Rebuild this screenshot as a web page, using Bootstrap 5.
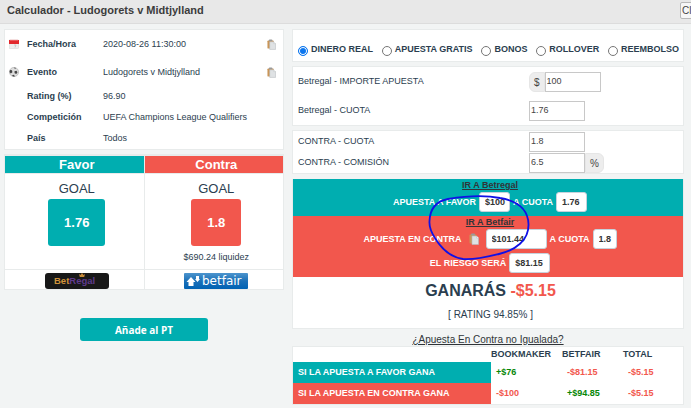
<!DOCTYPE html>
<html lang="es">
<head>
<meta charset="utf-8">
<meta name="viewport" content="width=device-width, initial-scale=1">
<title>Calculador - Ludogorets v Midtjylland</title>
<link rel="stylesheet" href="https://cdn.jsdelivr.net/npm/bootstrap@5.3.0/dist/css/bootstrap.min.css">
<style>
:root { --teal: #00aeb0; --coral: #f2574d; --ink: #2b3e4f; --line: #e8ebeb; }
body { background: #f2f4f4; color: var(--ink); font: 9px/13px "Liberation Sans", Arial, sans-serif; overflow-x: hidden; }
.topbar { background: #e8e8e8; border-bottom: 1px solid #dcdcdc; height: 24px; padding-left: 7px; overflow: hidden; }
.topbar h1 { font-size: 11px; line-height: 20px; color: #3c3c3c; }
.close-btn { width: 44px; height: 17px; margin: 2px -33px 0 0; padding: 0 1px; border: 1px solid #b8b8b8; border-radius: 2px; background: #f6f6f6; color: #444; font-size: 10px; line-height: 14px; text-align: left; }
.layout { display: grid; grid-template-columns: 5fr 7fr; column-gap: 8px; padding: 5px 7px 0 4px; }
.panel { background: #fff; border: 1px solid var(--line); }
.teal-bg { background: var(--teal); color: #fff; }
.coral-bg { background: var(--coral); color: #fff; }
.info td, .info th { padding: 0; height: 21px; vertical-align: middle; }
.info tr.tall > * { height: 28px; }
.info .ic { width: 22px; padding-left: 4px; }
.info th { width: 76px; }
.info .clip { width: 16px; }
.info svg { display: block; }
.bets { table-layout: fixed; }
.bets th, .bets td { padding: 0 0 0 5px; text-align: center; border: 1px solid var(--line); }
.bets thead th { font-size: 13px; line-height: 17px; border-top-width: 2px; }
.bets .goal td { height: 96px; vertical-align: top; padding-top: 7px; }
.bets .goal h2 { font-size: 13px; line-height: 16px; font-weight: 400; margin: 0 0 2px; }
.odd { border: 0; border-radius: 3px; height: 47px; padding: 0 16px; font-size: 13px; font-weight: 700; }
.liq { margin-top: 5px; }
.bets .logos td { height: 20px; padding-top: 2px; }
.bets .logos a, .bets .logos svg { display: block; }
.bets .logos svg { margin: auto; }
.add-btn { width: 128px; height: 23px; margin-top: 28px; border: 0; border-radius: 3px; font: bold 10px/20px "Open Sans", sans-serif; }
.modes { height: 33px; padding: 7px 4px 0 5px; font-weight: 700; }
.modes input { appearance: none; flex: none; width: 10px; height: 10px; margin: 3px 3px 0 0; border: 1px solid #767676; border-radius: 50%; background: #fff; }
.modes input:checked { border-color: #0b76ef; background: #0b76ef; box-shadow: inset 0 0 0 1px #fff; }
.fields { margin-top: 4px; padding-left: 5px; }
.field { height: 21px; }
.fields.roomy { padding-top: 4px; padding-bottom: 4px; }
.fields.roomy .field + .field { margin-top: 8px; }
.fields > .field > label { flex: 0 0 231px; }
.box-in { width: 56px; height: 20px; padding: 0 2px 1px 1px; border: 1px solid #c8c8c8; border-radius: 0; background: #fff; color: #444; outline: 0; }
.addon { height: 20px; background: #ededed; color: #444; border: 1px solid #e6e6e6; padding: 3px 4px 0; font-size: 10px; }
.summary { margin-top: 5px; border-top-width: 0; }
.summary a, .more a { color: #303438; text-decoration: underline; }
.band { font-weight: 700; padding: 0 0 4px 4px; }
.band > a { line-height: 13px; display: block; }
.line { height: 20px; gap: 3px; }
.line + .line { margin-top: 4px; }
.res { height: 20px; border: 1px solid #c6d2dc; border-radius: 3px; background: #fff; color: #333; font-weight: 700; padding: 0 0 0 5px; outline: 0; }
.w-s { width: 24px; } .w-m { width: 31px; } .w-l { width: 41px; } .w-xl { width: 61px; }
.gain { font-size: 16px; line-height: 20px; font-weight: 700; padding: 4px 0 0 5px; }
.rate { font-size: 10px; height: 27px; padding: 7px 0 0 5px; }
.neg { color: var(--coral); } .pos { color: #068606; }
.more { font-size: 10px; line-height: 13px; margin-top: 4px; text-align: center; }
.pen { left: 50%; top: 13px; margin-left: -62px; pointer-events: none; }
.totals th, .totals td { padding: 0; height: 21px; font-weight: 700; }
.totals thead th { height: 15px; }
.totals tbody th { padding-left: 5px; width: 198px; }
.totals td { padding-left: 5px; }
.totals thead td { height: 15px; }
.totals td:nth-child(2) { width: 71px; } .totals td:nth-child(3) { width: 61px; }
</style>
</head>
<body>
<svg width="0" height="0" class="position-absolute" aria-hidden="true">
  <symbol id="clip" viewBox="0 0 10 12">
    <rect x="0.5" y="1.5" width="7" height="9" rx="1" fill="#c99558"/><rect x="2" y="0.5" width="4" height="2" rx="1" fill="#9a9a9a"/>
    <path d="M3 3h4.500L9.500 5v6.500H3z" fill="#dfe2e4" stroke="#b6babd" stroke-width=".6"/><path d="M7.500 3v2h2" fill="#fff" stroke="#b6babd" stroke-width=".5"/>
  </symbol>
</svg>
<header class="topbar d-flex justify-content-between align-items-start">
  <h1 class="m-0 fw-bold">Calculador - Ludogorets v Midtjylland</h1>
  <button class="close-btn flex-shrink-0" type="button">Close</button>
</header>
<main class="layout">
  <section>
    <div class="panel">
      <table class="info w-100">
        <tr class="tall">
          <td class="ic"><svg width="10" height="10" viewBox="0 0 10 10"><rect x=".5" y="1" width="9" height="8.500" fill="#eee" stroke="#d2d2d2" stroke-width=".5"/><path d="M0 1h10v4H0z" fill="#e2292d"/><path d="M2 0v2M4 0v2M6 0v2M8 0v2" stroke="#f5b5b5" stroke-width=".7"/><path d="M5 6h2L6 8.500" fill="none" stroke="#bbb" stroke-width=".7"/></svg></td>
          <th scope="row">Fecha/Hora</th><td>2020-08-26 11:30:00</td>
          <td class="clip"><svg width="9" height="11"><use href="#clip"/></svg></td>
        </tr>
        <tr class="tall">
          <td class="ic"><svg width="10" height="10" viewBox="0 0 10 10"><circle cx="5" cy="5" r="4.600" fill="#ddd" stroke="#aaa" stroke-width=".6"/><path d="M1 3l2 .3.400 2L1.800 6.600.500 5zM5.500 4.300l2-.6 1 1.600-1.200 1.700-1.700-.8zM3 8.200l2-.4.900 1.700H4zM5 .500L7 1 6 2z" fill="#444"/></svg></td>
          <th scope="row">Evento</th><td>Ludogorets v Midtjylland</td>
          <td class="clip"><svg width="9" height="11"><use href="#clip"/></svg></td>
        </tr>
        <tr><td class="ic"></td><th scope="row">Rating (%)</th><td colspan="2">96.90</td></tr>
        <tr><td class="ic"></td><th scope="row">Competición</th><td colspan="2">UEFA Champions League Qualifiers</td></tr>
        <tr><td class="ic"></td><th scope="row">País</th><td colspan="2">Todos</td></tr>
      </table>
    </div>
    <table class="bets w-100 bg-white mt-1">
      <thead><tr><th class="teal-bg" scope="col">Favor</th><th class="coral-bg" scope="col">Contra</th></tr></thead>
      <tbody>
        <tr class="goal">
          <td><h2>GOAL</h2><button class="odd teal-bg" type="button">1.76</button></td>
          <td><h2>GOAL</h2><button class="odd coral-bg" type="button">1.8</button><div class="liq">$690.24 liquidez</div></td>
        </tr>
        <tr class="logos">
          <td><a href="#" aria-label="BetRegal"><svg width="64" height="16" viewBox="0 0 64 16"><rect width="64" height="16" rx="3" fill="#181818"/><text x="9" y="11" fill="#d0933a" font-family="Liberation Sans, Arial, sans-serif" font-size="9.500" font-weight="700">Bet<tspan fill="#5f3a8c">Regal</tspan></text><path d="M34 1l1.500 1L37 0l1.500 2L40 1l-.8 3h-4.400z" fill="#c78a38"/></svg></a></td>
          <td><a href="#" aria-label="betfair"><svg width="64" height="16" viewBox="0 0 64 16"><defs><linearGradient id="bf" x2="0" y2="1"><stop stop-color="#4d94cd"/><stop offset=".5" stop-color="#1b70b8"/><stop offset="1" stop-color="#0062b4"/></linearGradient></defs><rect width="64" height="16" rx="1" fill="url(#bf)"/><path d="M7 4l4.500 5H9.500v4h-5V9H2.500z" fill="#fff"/><path d="M13.500 9L11 6h1V3h3v3h1z" fill="#fff"/><text x="18" y="12" fill="#fff" font-family="DejaVu Sans, sans-serif" font-size="12">betfair</text></svg></a></td>
        </tr>
      </tbody>
    </table>
    <div class="text-center"><button class="add-btn teal-bg" type="button">Añade al PT</button></div>
  </section>

  <section>
    <div class="panel modes d-flex justify-content-between align-items-center">
      <label class="d-flex"><input type="radio" name="mode" checked>DINERO REAL</label>
      <label class="d-flex"><input type="radio" name="mode">APUESTA GRATIS</label>
      <label class="d-flex"><input type="radio" name="mode">BONOS</label>
      <label class="d-flex"><input type="radio" name="mode">ROLLOVER</label>
      <label class="d-flex"><input type="radio" name="mode">REEMBOLSO</label>
    </div>
    <div class="panel fields roomy">
      <div class="field d-flex align-items-center"><label for="stake">Betregal - IMPORTE APUESTA</label><span class="addon rounded-start">$</span><input class="box-in" id="stake" value="100"></div>
      <div class="field d-flex align-items-center"><label for="back">Betregal - CUOTA</label><input class="box-in" id="back" value="1.76"></div>
    </div>
    <div class="panel fields">
      <div class="field d-flex align-items-center"><label for="lay">CONTRA - CUOTA</label><input class="box-in" id="lay" value="1.8"></div>
      <div class="field d-flex align-items-center"><label for="fee">CONTRA - COMISIÓN</label><input class="box-in" id="fee" value="6.5"><span class="addon rounded-end">%</span></div>
    </div>
    <div class="panel summary position-relative text-center">
      <div class="band teal-bg">
        <a href="#">IR A Betregal</a>
        <div class="line d-flex justify-content-center align-items-center"><label for="r1">APUESTA A FAVOR</label><input class="res w-m" id="r1" value="$100" readonly><label for="r2">A CUOTA</label><input class="res w-m" id="r2" value="1.76" readonly></div>
      </div>
      <div class="band coral-bg">
        <a href="#">IR A Betfair</a>
        <div class="line d-flex justify-content-center align-items-center"><label for="r3">APUESTA EN CONTRA</label><svg class="mx-1" width="10" height="12"><use href="#clip"/></svg><input class="res w-xl" id="r3" value="$101.44" readonly><label for="r4">A CUOTA</label><input class="res w-s" id="r4" value="1.8" readonly></div>
        <div class="line d-flex justify-content-center align-items-center"><label for="r5">EL RIESGO SERÁ</label><input class="res w-l" id="r5" value="$81.15" readonly></div>
      </div>
      <div class="gain">GANARÁS <span class="neg">-$5.15</span></div>
      <div class="rate">[ RATING 94.85% ]</div>
      <svg class="pen position-absolute" width="108" height="72" viewBox="426 192 108 72" aria-hidden="true"><path d="M429.500 221C430 207 438 201 448 199C466 196 485 195 500 198C518 201 528 210 528.500 224C529 240 516 250 499 254C487 257 476 260 463 259C449 257 441 248 435 238C431 232 429 227 429.500 221" fill="none" stroke="#1010e6" stroke-width="1.800"/></svg>
    </div>
    <div class="more"><a href="#">¿Apuesta En Contra no Igualada?</a></div>
    <div class="panel">
      <table class="totals w-100">
        <thead><tr><td></td><th scope="col">BOOKMAKER</th><th scope="col">BETFAIR</th><th scope="col">TOTAL</th></tr></thead>
        <tbody>
          <tr><th class="teal-bg" scope="row">SI LA APUESTA A FAVOR GANA</th><td class="pos">+$76</td><td class="neg">-$81.15</td><td class="neg">-$5.15</td></tr>
          <tr><th class="coral-bg" scope="row">SI LA APUESTA EN CONTRA GANA</th><td class="neg">-$100</td><td class="pos">+$94.85</td><td class="neg">-$5.15</td></tr>
        </tbody>
      </table>
    </div>
  </section>
</main>
<script src="https://cdn.jsdelivr.net/npm/bootstrap@5.3.0/dist/js/bootstrap.bundle.min.js"></script>
</body>
</html>
